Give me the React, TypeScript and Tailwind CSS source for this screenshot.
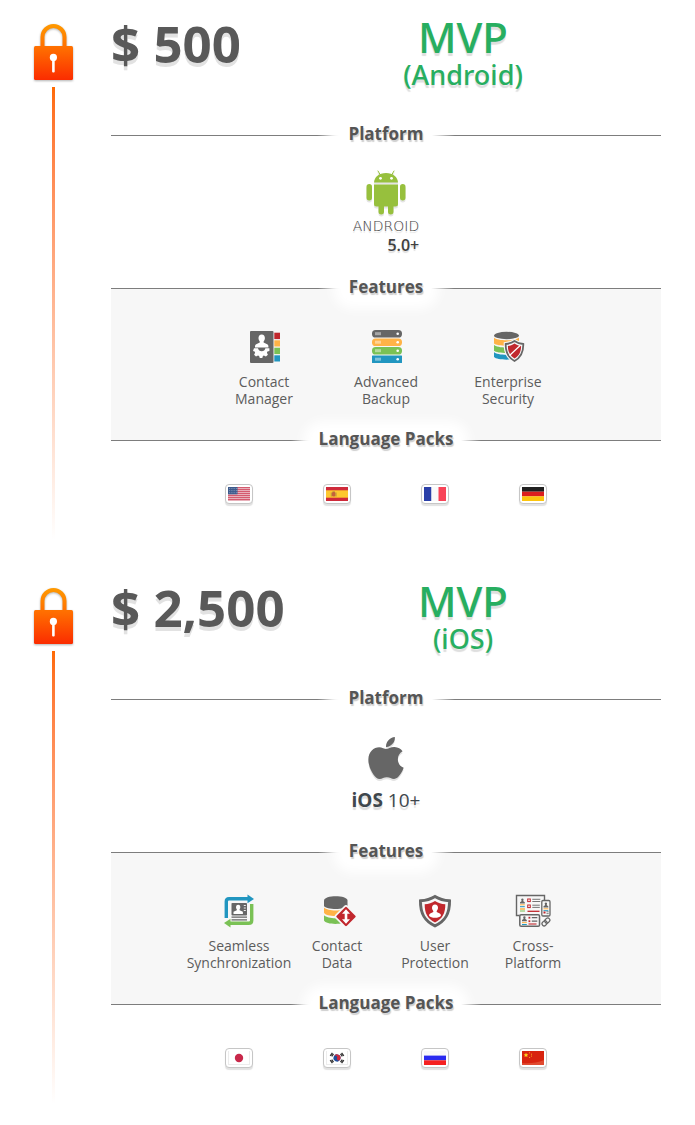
import type { ReactNode } from "react";
import { FaApple } from "react-icons/fa";

const GRAY = "#666666";
const RED = "#c1272d";
const ORANGE = "#ffb347";
const GREEN = "#7ac155";
const BLUE = "#2196c0";

function LockIcon({ id }: { id: string }) {
  return (
    <svg viewBox="0 0 40 57" className="h-[57px] w-10 shrink-0 drop-shadow-[0_1px_1px_rgba(0,0,0,0.3)]" aria-hidden="true">
      <defs>
        <linearGradient id={id} gradientUnits="userSpaceOnUse" x1="0" y1="0" x2="0" y2="56">
          <stop offset="0" stopColor="#ff9a00" />
          <stop offset="0.45" stopColor="#ff6c00" />
          <stop offset="1" stopColor="#fb2c00" />
        </linearGradient>
      </defs>
      <path d="M9.500 24V13a11 11 0 0 1 22 0v11" fill="none" stroke={`url(#${id})`} strokeWidth="4" />
      <rect x="1" y="22" width="39" height="34" rx="1.5" fill={`url(#${id})`} />
      <circle cx="20.400" cy="33.400" r="3.600" fill="#fff" />
      <rect x="19.100" y="35" width="2.600" height="13.500" rx="1" fill="#fff" />
    </svg>
  );
}

function AndroidRobot() {
  return (
    <svg viewBox="0 0 40 45" className="h-[45px] w-10 drop-shadow-[0_2px_0_#e4e4e4]" fill="#97c03d" aria-hidden="true">
      <path d="M12 1l3 5M28 1l-3 5" stroke="#97c03d" strokeWidth="1" strokeLinecap="round" />
      <path d="M8 12.500C8.300 7 13 3 20 3S31.700 7 32 12.500z" />
      <circle cx="14.500" cy="8.300" r="1.400" fill="#fff" />
      <circle cx="25.500" cy="8.300" r="1.400" fill="#fff" />
      <path d="M8 14.500h24V34a2.500 2.500 0 0 1-2.500 2.500h-19A2.500 2.500 0 0 1 8 34z" />
      <rect x="0.500" y="14" width="5.500" height="16.500" rx="2.750" />
      <rect x="34" y="14" width="5.500" height="16.500" rx="2.750" />
      <rect x="12.500" y="30" width="5.500" height="14.500" rx="2.750" />
      <rect x="22" y="30" width="5.500" height="14.500" rx="2.750" />
    </svg>
  );
}

function Icon({ children }: { children: ReactNode }) {
  return (
    <svg viewBox="0 0 32 32" className="h-8 w-8 overflow-visible" aria-hidden="true">
      {children}
    </svg>
  );
}

function ContactManagerIcon() {
  return (
    <Icon>
      <rect x="2" y="0" width="23.500" height="32" rx="1" fill={GRAY} />
      <rect x="26.300" y="1.700" width="5.700" height="6.400" fill={RED} />
      <rect x="26.300" y="9.300" width="5.700" height="6.200" fill={ORANGE} />
      <rect x="26.300" y="16.700" width="5.700" height="6.400" fill={GREEN} />
      <rect x="26.300" y="24.300" width="5.700" height="6.200" fill={BLUE} />
      <path
        d="M13.700 3.500c2.100 0 3.200 1.600 3.200 3.500 0 1.500-.6 2.600-1.300 3.400v1.200l3.600 1.700c.8.400 1.200 1.100 1.200 2v1.200H7v-1.200c0-.9.400-1.600 1.200-2l3.600-1.700v-1.200c-.7-.8-1.300-1.900-1.300-3.400 0-1.900 1.100-3.500 3.200-3.500z"
        fill="#fff"
      />
      <path d="M6 17.200h4a3.800 3.800 0 0 0 7.400 0h4v2.800l-2 .5-.5 1.200 1 2-2 1.900-2-1-1 .5-.6 1.800h-2.500l-.7-1.900-1.100-.4-2 1-1.900-1.900 1-2-.5-1.200-1.600-.5z" fill="#fff" />
    </Icon>
  );
}

function BackupIcon() {
  const rows = [
    { y: -1, color: GRAY },
    { y: 7.500, color: ORANGE },
    { y: 16, color: GREEN },
    { y: 24.500, color: BLUE },
  ];
  return (
    <Icon>
      {rows.map((row, i) => (
        <g key={row.color}>
          <rect x="2" y={row.y} width="30" height="7.500" rx={i === 3 ? 0.500 : 3.600} fill={row.color} />
          <path d={`M6 ${row.y + 2.200}v3M8 ${row.y + 2.200}v3M10 ${row.y + 2.200}v3`} stroke="#fff" strokeOpacity="0.850" strokeWidth="1" />
          <circle cx="27.700" cy={row.y + 3.700} r="1.300" fill="#fff" />
        </g>
      ))}
    </Icon>
  );
}

function SecurityIcon() {
  return (
    <Icon>
      <g transform="translate(1 0)">
        <ellipse cx="13.500" cy="4.500" rx="12.500" ry="3.700" fill={GRAY} />
        <path d="M1 6.500c3 3.700 22 3.700 25 0v6c-3 3-22 3-25 0z" fill={ORANGE} />
        <path d="M1 13.800c3 3.700 22 3.700 25 0v6c-3 3-22 3-25 0z" fill={GREEN} />
        <path d="M1 21c3 3.700 22 3.700 25 0v5c-3 3.500-22 3.500-25 0z" fill={BLUE} />
        <path d="M21.500 10c2.500 1.800 5.500 2.700 8.800 3 .2 8-2.300 13.500-8.800 17-6.500-3.500-9-9-8.800-17 3.300-.3 6.300-1.200 8.800-3z" fill="#f7f7f7" stroke="#f7f7f7" strokeWidth="4" />
        <path d="M21.500 10c2.500 1.800 5.500 2.700 8.800 3 .2 8-2.300 13.500-8.800 17-6.500-3.500-9-9-8.800-17 3.300-.3 6.300-1.200 8.800-3z" fill="#f7f7f7" stroke={GRAY} strokeWidth="1.800" />
        <path d="M21.500 12.500c2.200 1.500 4.400 2.200 6.600 2.400 0 5.800-2 9.900-6.600 12.700-4.600-2.800-6.600-6.900-6.600-12.700 2.200-.2 4.400-.9 6.600-2.400z" fill={RED} />
        <path d="M16.500 24.500l10.700-10" stroke="#fff" strokeWidth="1.200" />
      </g>
    </Icon>
  );
}

function SyncIcon() {
  return (
    <Icon>
      <path d="M3.300 23V6.500Q3.300 3.700 6 3.700h19" fill="none" stroke={BLUE} strokeWidth="3.400" />
      <path d="M24.500 -.500L31 3.900l-6.500 4.400z" fill={BLUE} />
      <path d="M28.700 9v16.500q0 2.800-3 2.800H7" fill="none" stroke={GREEN} strokeWidth="3.400" />
      <path d="M7.500 23.700L1 28.100l6.500 4.400z" fill={GREEN} />
      <rect x="8.500" y="8" width="15.500" height="12.500" rx="0.800" fill={GRAY} />
      <path d="M10.500 19v-2.300l3.300-1.500v-1c-1-1-1.300-4.500 1.400-4.500s2.400 3.500 1.400 4.500v1l3.300 1.500V19z" fill="#fff" />
      <path d="M20.800 10.500h2M20.800 13h2M20.800 15.500h2" stroke="#fff" strokeWidth="0.900" />
      <path d="M8.500 22.200H24M8.500 24.800H24" stroke={GRAY} strokeWidth="1.200" />
    </Icon>
  );
}

function ContactDataIcon() {
  return (
    <Icon>
      <g transform="translate(1.500 0)">
        <path d="M1.500 5.500C1.500 -.300 25 -.300 25 5.500V11c-2 4-21.500 4-23.500 0z" fill={GRAY} />
        <path d="M1.500 12.500c4 4 19 4 23.500 0v5.300c-3 4.300-21.500 4.300-23.500 0z" fill={ORANGE} />
        <path d="M1.500 20.300c4 4 19 4 23.500 0v5.200c-3 4.500-21.500 4.500-23.500 0z" fill={GREEN} />
        <rect x="15.500" y="13.500" width="16" height="16" rx="2" transform="rotate(45 23.500 21.500)" fill={RED} stroke="#f7f7f7" strokeWidth="1.600" />
        <path d="M23.500 14.200l4 4.500h-2.700v5.600h2.700l-4 4.500-4-4.500h2.700v-5.600h-2.700z" fill="#fff" />
      </g>
    </Icon>
  );
}

function ProtectionIcon() {
  return (
    <Icon>
      <path d="M16 1.500c4.300 2.700 9 4 14.500 4.300.3 12.500-3.800 20.200-14.500 25C5.300 26 1.200 18.300 1.500 5.800 7 5.500 11.700 4.200 16 1.500z" fill="#f7f7f7" stroke={GRAY} strokeWidth="3" />
      <path d="M16 6c3 2 6.300 3 10.300 3.300.1 8.800-2.800 14.500-10.300 18.200C8.500 23.800 5.600 18.100 5.700 9.300 9.700 9 13 8 16 6z" fill={RED} />
      <path d="M16 9.500c2 0 3 1.400 3 3.300 0 1.400-.6 2.500-1.300 3.100v1.200l3.100 1.500c.9.400 1.200 1.200 1 2.400-1.200 1.200-3 1.800-5.800 1.800s-4.600-.6-5.800-1.800c-.2-1.200.1-2 1-2.400l3.100-1.500v-1.200C13.600 15.300 13 14.200 13 12.800c0-1.900 1-3.300 3-3.300z" fill="#fff" />
    </Icon>
  );
}

function MiniContact({ x, y }: { x: number; y: number }) {
  return (
    <g transform={`translate(${x} ${y})`}>
      <path d="M0 5V3.700l1.500-.9V2C.9.900 1.300 0 2.400 0s1.500.9.900 2v.8l1.500.9V5z" fill={GRAY} />
      <path d="M0 6.300h4.800" stroke={ORANGE} />
      <path d="M0 8.200h4.800" stroke={BLUE} />
    </g>
  );
}

function CrossPlatformIcon() {
  return (
    <Icon>
      <path d="M2.500 20.500H-.500V.500h28V5" fill="none" stroke={GRAY} strokeWidth="1.400" />
      <g transform="translate(0.500 0)">
        <MiniContact x={2.500} y={3.500} />
        <path d="M2.500 14h5" stroke={ORANGE} strokeWidth="1.500" />
        <path d="M2.500 16h5" stroke={GREEN} />
        <rect x="10.200" y="4" width="2.600" height="2.600" fill="none" stroke={RED} />
        <rect x="10.200" y="10" width="2.600" height="2.600" fill="none" stroke={RED} />
        <path d="M14.800 4.300h8M14.800 6.500h8M14.800 10.200h7.500M14.800 12.400h7.500" stroke={GRAY} strokeWidth="0.900" />
        <path d="M10 16.300h12" stroke={RED} strokeWidth="1.300" />
      </g>
      <rect x="24.800" y="5.500" width="8.200" height="15.500" rx="1.200" fill="#f7f7f7" stroke={GRAY} strokeWidth="1.300" />
      <MiniContact x={26.500} y={7.500} />
      <path d="M26.500 17.500h2" stroke={RED} strokeWidth="2" />
      <path d="M29.500 16.800h2.200M29.500 18.600h2.200" stroke={GRAY} strokeWidth="0.800" />
      <rect x="2.800" y="19.800" width="19.700" height="11.500" rx="1.300" fill="#f7f7f7" stroke={GRAY} strokeWidth="1.500" />
      <MiniContact x={5} y={21.300} />
      <rect x="11.500" y="21.800" width="1.800" height="1.800" fill={RED} />
      <rect x="11.500" y="25.300" width="1.800" height="1.800" fill={RED} />
      <path d="M14.800 22.700h5.500M14.800 26.200h5.500" stroke={GRAY} strokeWidth="1.200" />
      <path d="M11.500 29h8" stroke={RED} strokeWidth="1.100" />
      <g transform="rotate(-45 29 27)" fill="none" stroke={GRAY} strokeWidth="1.200">
        <rect x="24.300" y="24.800" width="5.500" height="4.200" rx="2.100" />
        <rect x="28.200" y="24.800" width="5.500" height="4.200" rx="2.100" />
      </g>
    </Icon>
  );
}

function Flag({ name, children }: { name: string; children: ReactNode }) {
  return (
    <li className="flex justify-center">
      <span className="rounded-[4px] border border-[#c6c6c6] bg-white p-[2px] shadow-[0_2px_1px_#e2e2e2]">
        <svg viewBox="0 0 22 14" className="block h-[14px] w-[22px]" role="img" aria-label={name}>
          {children}
        </svg>
      </span>
    </li>
  );
}

function UsFlag() {
  return (
    <Flag name="English (US)">
      <rect width="22" height="14" fill="#f4e4e8" />
      {[0, 2, 4, 6, 8, 10, 12].map((y) => (
        <rect key={y} y={y + 0.200} width="22" height="1.100" fill="#cc3a52" />
      ))}
      <rect width="9.500" height="7.300" fill="#3d5a8c" />
      <path d="M1 1.500h8M1 3.600h8M1 5.700h8" stroke="#a9bad4" strokeWidth="0.700" strokeDasharray="0.800 1" />
    </Flag>
  );
}

function EsFlag() {
  return (
    <Flag name="Spanish">
      <rect width="22" height="14" fill="#cf2a3a" />
      <rect y="3.300" width="22" height="7.400" fill="#fdc82f" />
      <rect x="6" y="5" width="3.400" height="4.500" rx="1" fill="#c4603c" />
      <path d="M5.300 5.500v4M10 5.500v4M6.500 4.800h2.400" stroke="#a7853c" strokeWidth="0.800" />
    </Flag>
  );
}

function FrFlag() {
  return (
    <Flag name="French">
      <rect width="7.500" height="14" fill="#2a3fa8" />
      <rect x="7.500" width="7" height="14" fill="#fafafa" />
      <rect x="14.500" width="7.500" height="14" fill="#f84458" />
    </Flag>
  );
}

function DeFlag() {
  return (
    <Flag name="German">
      <rect width="22" height="4.700" fill="#202020" />
      <rect y="4.700" width="22" height="4.700" fill="#dc1f1f" />
      <rect y="9.300" width="22" height="4.700" fill="#fcc50e" />
    </Flag>
  );
}

function JpFlag() {
  return (
    <Flag name="Japanese">
      <path d="M.500 0v14M21.500 0v14M0 13.500h22" stroke="#ececec" />
      <circle cx="11" cy="7" r="4.200" fill="#c8284a" />
    </Flag>
  );
}

function KrFlag() {
  return (
    <Flag name="Korean">
      <path d="M.500 0v14M21.500 0v14M0 13.500h22" stroke="#ececec" />
      <g transform="rotate(25 11 7)">
        <circle cx="11" cy="7" r="3.500" fill="#1f4f9c" />
        <path d="M7.500 7a3.500 3.500 0 0 1 7 0 1.750 1.750 0 0 1-3.500 0 1.750 1.750 0 0 0-3.500 0z" fill="#cf2a3e" />
      </g>
      <path
        d="M4.200 4.800l2.200-2.900M5.700 5.300l1.800-2.400M15.600 1.900l2.200 2.900M14.500 2.900l1.800 2.400M4.200 9.200l2.200 2.900M5.700 8.700l1.800 2.400M15.600 12.100l2.200-2.900M14.500 11.100l1.800-2.400"
        stroke="#333"
        strokeWidth="1.300"
      />
    </Flag>
  );
}

function RuFlag() {
  return (
    <Flag name="Russian">
      <rect width="22" height="4.600" fill="#fafafa" />
      <rect y="4.600" width="22" height="4.700" fill="#2b2bf0" />
      <rect y="9.300" width="22" height="4.700" fill="#f52020" />
    </Flag>
  );
}

function CnFlag() {
  return (
    <Flag name="Chinese">
      <rect width="22" height="14" fill="#d8230f" />
      <path d="M0 14V12Q12 13 22 9v5z" fill="#e04a30" />
      <path d="M4 1.800l.7 1.500 1.600.1-1.200 1.100.4 1.600L4 5.300l-1.500.8.4-1.600-1.200-1.100 1.600-.1z" fill="#ffd51f" />
      <path d="M7.200 1.800h.9M9 3.200h.9M9 5.100h.9M7.200 6.500h.9" stroke="#ffc51f" strokeWidth="0.900" />
    </Flag>
  );
}

function Divider({ children }: { children: ReactNode }) {
  return (
    <div className="relative z-10 flex h-px items-center">
      <span className="h-px flex-1 bg-linear-to-r from-[#7d7d7d] from-90% to-transparent" />
      <h3 className="rounded-xl bg-white px-2 pb-1 text-[17px] leading-5 font-bold text-[#555555] shadow-[0_0_12px_8px_#ffffff] [text-shadow:1px_2px_1px_#cfcfcf]">
        {children}
      </h3>
      <span className="relative h-px flex-1 bg-linear-to-l from-[#7d7d7d] from-90% to-transparent" />
    </div>
  );
}

type Feature = { lines: [string, string]; icon: ReactNode };

type PlanProps = {
  id: string;
  price: string;
  platform: string;
  logo: ReactNode;
  features: Feature[];
  flags: ReactNode;
};

function Plan({ id, price, platform, logo, features, flags }: PlanProps) {
  return (
    <section className="flex gap-[38px] pr-[34px] pl-[33px]">
      <div className="flex w-10 shrink-0 flex-col items-center gap-[6px] pt-6 pb-6">
        <LockIcon id={id} />
        <span className="w-[3px] flex-1 bg-linear-to-b from-[#ff6a00] to-white" />
      </div>

      <div className="min-w-0 flex-1">
        <header className="grid grid-cols-[50fr_28fr_22fr] pt-5 pb-[39px]">
          <p className="text-[51px] leading-[46px] font-bold whitespace-nowrap text-[#595959] [text-shadow:0_4px_0_#e2e2e2]">
            {price}
          </p>
          <h2 className="text-center font-['Noto_Sans','Open_Sans',sans-serif] font-medium whitespace-nowrap text-[#27ae60] [text-shadow:0_3px_1px_#dedede]">
            <span className="block text-[42px] leading-[34px]">MVP</span>
            <span className="block text-[27px] leading-[42px]">({platform})</span>
          </h2>
        </header>

        <Divider>Platform</Divider>
        <div className="flex min-h-[152px] flex-col items-center pt-[34px]">{logo}</div>

        <Divider>Features</Divider>
        <div className="bg-[#f7f7f7] pt-[42px] pb-[33px]">
          <ul className={features.length === 3 ? "mx-auto grid max-w-[366px] grid-cols-3" : "mx-auto grid max-w-[392px] grid-cols-4"}>
            {features.map((feature) => (
              <li key={feature.lines.join(" ")} className="flex flex-col items-center gap-[10px]">
                {feature.icon}
                <p className="text-center text-[14px] leading-[17px] font-medium whitespace-nowrap text-[#5c5c5c]">
                  {feature.lines[0]}
                  <br />
                  {feature.lines[1]}
                </p>
              </li>
            ))}
          </ul>
        </div>

        <Divider>Language Packs</Divider>
        <ul className="mx-auto grid max-w-[392px] grid-cols-4 pt-[43px] pb-[60px]">{flags}</ul>
      </div>
    </section>
  );
}

export default function App() {
  return (
    <main className="bg-white font-['Open_Sans','Noto_Sans',sans-serif]">
      <Plan
        id="lock-android"
        price="$ 500"
        platform="Android"
        logo={
          <>
            <AndroidRobot />
            <p className="flex flex-col items-end text-[#404040] [text-shadow:0_2px_1px_#dcdcdc]">
              <span className="font-['DejaVu_Sans',sans-serif] text-[14px] leading-[22px] font-extralight">ANDROID</span>
              <span className="text-[16px] leading-4 font-semibold">5.0+</span>
            </p>
          </>
        }
        features={[
          { lines: ["Contact", "Manager"], icon: <ContactManagerIcon /> },
          { lines: ["Advanced", "Backup"], icon: <BackupIcon /> },
          { lines: ["Enterprise", "Security"], icon: <SecurityIcon /> },
        ]}
        flags={
          <>
            <UsFlag />
            <EsFlag />
            <FrFlag />
            <DeFlag />
          </>
        }
      />
      <Plan
        id="lock-ios"
        price="$ 2,500"
        platform="iOS"
        logo={
          <>
            <FaApple className="h-12 w-[46px] text-[#666666] drop-shadow-[0_2px_0_#e2e2e2]" aria-hidden="true" />
            <p className="pt-1 text-[19px] leading-7 text-[#3f474d] [text-shadow:0_3px_1px_#dedede]">
              <b className="font-bold">iOS</b> 10+
            </p>
          </>
        }
        features={[
          { lines: ["Seamless", "Synchronization"], icon: <SyncIcon /> },
          { lines: ["Contact", "Data"], icon: <ContactDataIcon /> },
          { lines: ["User", "Protection"], icon: <ProtectionIcon /> },
          { lines: ["Cross-", "Platform"], icon: <CrossPlatformIcon /> },
        ]}
        flags={
          <>
            <JpFlag />
            <KrFlag />
            <RuFlag />
            <CnFlag />
          </>
        }
      />
    </main>
  );
}
